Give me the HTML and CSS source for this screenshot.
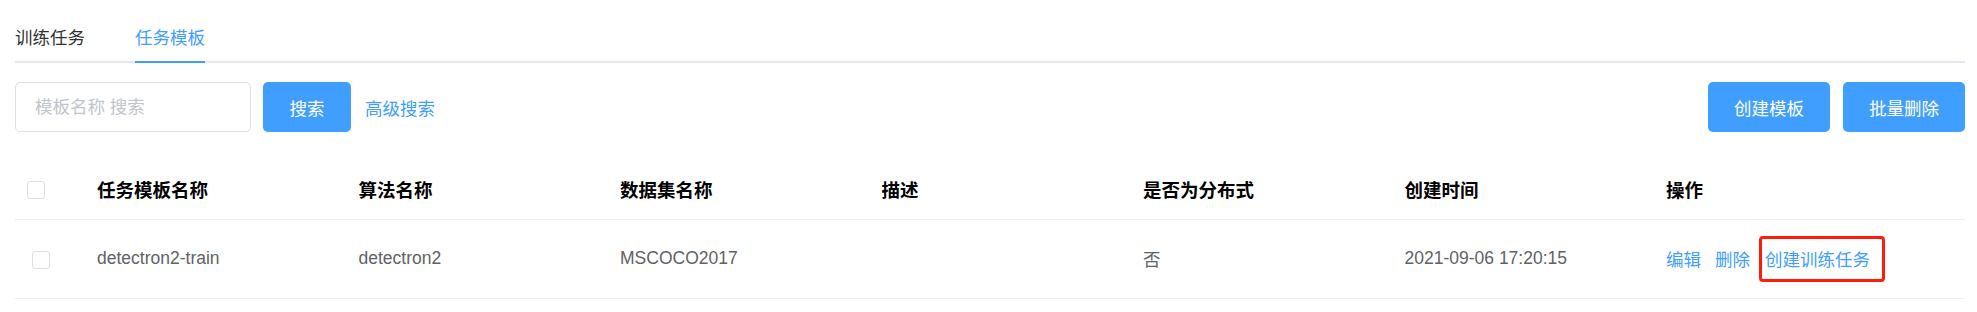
FILE: index.html
```html
<!DOCTYPE html>
<html lang="zh-CN">
<head>
<meta charset="utf-8">
<title>任务模板</title>
<link rel="stylesheet" href="styles.css">
</head>
<body>
<div class="page">
  <div class="tabs">
    <div class="tab"><span class="tab-label">训练任务</span></div>
    <div class="tab active"><span class="tab-label">任务模板</span></div>
  </div>

  <div class="toolbar">
    <div class="search">
      <input class="search-input" type="text" placeholder="模板名称 搜索">
      <button class="btn btn-search">搜索</button>
      <a class="link adv">高级搜索</a>
    </div>
    <div class="actions">
      <button class="btn btn-wide">创建模板</button>
      <button class="btn btn-wide">批量删除</button>
    </div>
  </div>

  <table class="grid">
    <colgroup>
      <col class="c-check">
      <col class="c-col">
      <col class="c-col">
      <col class="c-col">
      <col class="c-col">
      <col class="c-col">
      <col class="c-col">
      <col>
    </colgroup>
    <thead>
      <tr>
        <th class="th-check"><span class="checkbox"></span></th>
        <th>任务模板名称</th>
        <th>算法名称</th>
        <th>数据集名称</th>
        <th>描述</th>
        <th>是否为分布式</th>
        <th>创建时间</th>
        <th>操作</th>
      </tr>
    </thead>
    <tbody>
      <tr>
        <td class="td-check"><span class="checkbox"></span></td>
        <td>detectron2-train</td>
        <td>detectron2</td>
        <td>MSCOCO2017</td>
        <td></td>
        <td>否</td>
        <td>2021-09-06 17:20:15</td>
        <td>
          <div class="ops">
            <a class="link">编辑</a>
            <a class="link op-del">删除</a>
            <a class="link op-create">创建训练任务</a>
          </div>
        </td>
      </tr>
    </tbody>
  </table>
</div>
</body>
</html>
```

FILE: styles.css
```css
* { box-sizing: border-box; }

html, body {
  margin: 0;
  padding: 0;
  background: #ffffff;
  overflow: hidden;
}

body {
  font-family: "Liberation Sans", "Noto Sans CJK SC", sans-serif;
  font-size: 17.5px;
  color: #606266;
}

.page {
  padding: 16px 12px 0 15px;
}

/* Tabs */
.tabs {
  display: flex;
  border-bottom: 2px solid #e4e7ed;
  height: 47px;
}

.tab {
  height: 47px;
  padding: 0 25px;
  color: #303133;
  font-size: 17.5px;
}

.tab:first-child {
  padding-left: 0;
}

.tab-label {
  display: block;
  height: 47px;
  line-height: 45px;
}

.tab.active {
  color: #409eff;
}

.tab.active .tab-label {
  border-bottom: 2px solid #409eff;
}

/* Toolbar */
.toolbar {
  margin-top: 19px;
  display: flex;
  justify-content: space-between;
  align-items: center;
  height: 50px;
}

.search {
  display: flex;
  align-items: center;
}

.search-input {
  width: 236px;
  height: 50px;
  border: 1px solid #dcdfe6;
  border-radius: 5px;
  padding: 0 19px;
  font-family: inherit;
  font-size: 17.5px;
  color: #606266;
  outline: none;
}

.search-input::placeholder {
  color: #c0c4cc;
}

.btn {
  height: 50px;
  border: none;
  border-radius: 5px;
  background: #409eff;
  color: #ffffff;
  font-family: inherit;
  font-size: 17.5px;
  padding: 0;
  cursor: pointer;
}

.btn-search {
  width: 88px;
  margin-left: 12px;
}

.adv {
  margin-left: 14px;
}

.actions {
  display: flex;
  gap: 13px;
}

.btn-wide {
  width: 122px;
}

.link {
  color: #409eff;
  cursor: pointer;
}

/* Table */
.grid {
  margin-top: 28px;
  width: 1950px;
  table-layout: fixed;
  border-collapse: collapse;
}

.c-check { width: 69.5px; }
.c-col { width: 261.5px; }

.grid th,
.grid td {
  text-align: left;
  padding: 0 12.5px;
  border-bottom: 1px solid #ebeef5;
  white-space: nowrap;
}

.grid th {
  height: 59px;
  color: #000000;
  font-weight: bold;
  font-size: 18.5px;
}

.grid td {
  height: 79px;
  color: #606266;
  font-size: 17.5px;
}

.grid .th-check { padding-left: 12px; padding-top: 2px; }
.grid .td-check { padding-left: 17px; padding-top: 2px; }

.checkbox {
  display: block;
  width: 18px;
  height: 18px;
  border: 1px solid #dcdfe6;
  border-radius: 3px;
  background: #ffffff;
}

.ops {
  display: flex;
  align-items: center;
}

.op-del {
  margin-left: 14px;
}

.op-create {
  margin-left: 9px;
  height: 46px;
  display: flex;
  align-items: center;
  border: 3px solid #ff1a0a;
  border-radius: 4px;
  padding: 0 12px 0 3px;
}
```
